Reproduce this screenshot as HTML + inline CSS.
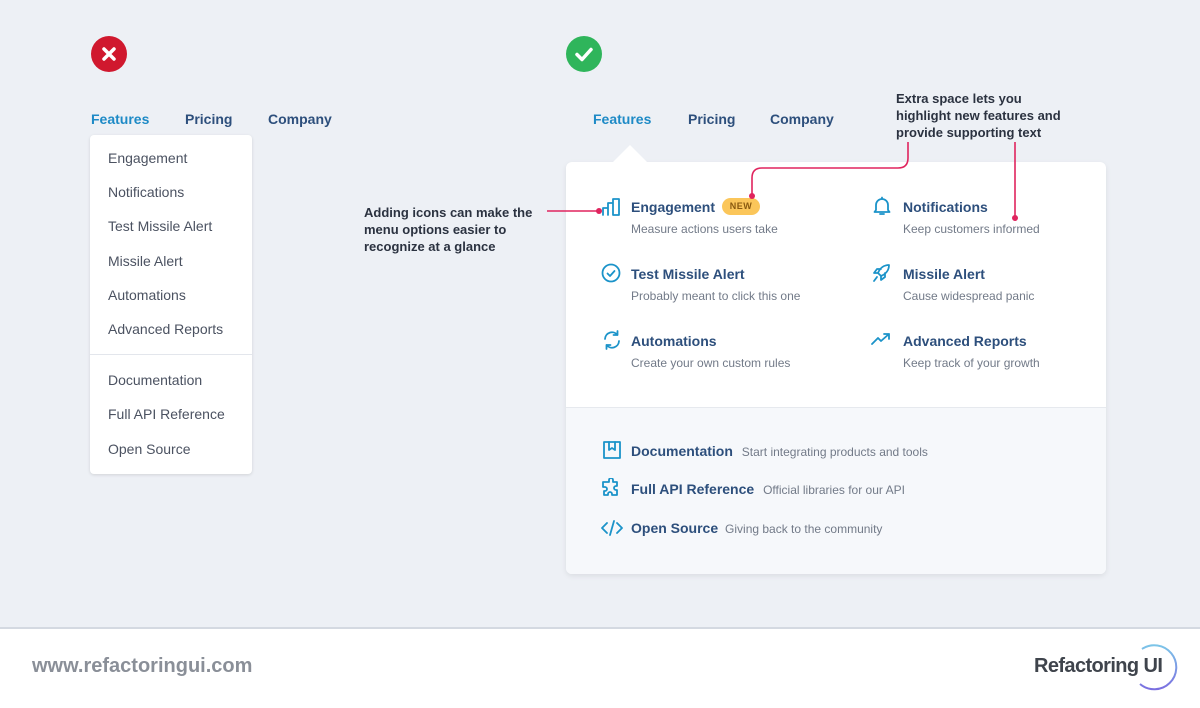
<!DOCTYPE html>
<html><head><meta charset="utf-8"><style>
*{margin:0;padding:0;box-sizing:border-box}
body{width:1200px;height:708px;background:#edf0f5;font-family:"Liberation Sans",sans-serif;position:relative;overflow:hidden}
.a{position:absolute;white-space:nowrap}
.nav{font-weight:bold;font-size:14px;color:#2d4f7c}
.nav.act{color:#1e8ac6}
.old{left:90px;top:135px;width:162px;height:339px;background:#fff;border-radius:4px;box-shadow:0 1px 3px rgba(0,0,0,.12)}
.old div{position:absolute;left:18px;font-size:14px;color:#4b5261}
.t{font-weight:bold;font-size:14px;color:#2d4f7c}
.s{font-size:12px;color:#727a88}
.note{font-weight:bold;font-size:13px;color:#2b3240;line-height:17px}
.panel{left:566px;top:162px;width:540px;height:412px;background:#fff;border-radius:6px;box-shadow:0 2px 6px rgba(0,0,0,.08);overflow:hidden}
svg.i{position:absolute;fill:none;stroke:#1b93c9;stroke-width:1.8;stroke-linecap:round;stroke-linejoin:round}
</style></head><body>
<svg class="a" style="left:91px;top:36px" width="36" height="36"><circle cx="18" cy="18" r="18" fill="#d0182e"/><path d="M13 13l10 10M23 13l-10 10" stroke="#fff" stroke-width="3.5" stroke-linecap="round"/></svg>
<svg class="a" style="left:566px;top:36px" width="36" height="36"><circle cx="18" cy="18" r="18" fill="#2fb55b"/><path d="M11 18.5l5 5 9-10" stroke="#fff" stroke-width="3.5" fill="none" stroke-linecap="round" stroke-linejoin="round"/></svg>

<div class="a nav act" style="left:91px;top:111px">Features</div>
<div class="a nav" style="left:185px;top:111px">Pricing</div>
<div class="a nav" style="left:268px;top:111px">Company</div>

<div class="a old">
<div style="top:15px">Engagement</div>
<div style="top:49px">Notifications</div>
<div style="top:83px">Test Missile Alert</div>
<div style="top:118px">Missile Alert</div>
<div style="top:152px">Automations</div>
<div style="top:186px">Advanced Reports</div>
<div style="top:219px;left:0;width:162px;height:1px;background:#e3e6ec"></div>
<div style="top:237px">Documentation</div>
<div style="top:271px">Full API Reference</div>
<div style="top:306px">Open Source</div>
</div>

<div class="a nav act" style="left:593px;top:111px">Features</div>
<div class="a nav" style="left:688px;top:111px">Pricing</div>
<div class="a nav" style="left:770px;top:111px">Company</div>

<div class="a panel">
<div class="a" style="left:0;top:245px;width:540px;height:167px;background:#f6f8fb;border-top:1px solid #e6e9ee"></div>
</div>
<div class="a" style="left:613px;top:145px;width:0;height:0;border-left:17px solid transparent;border-right:17px solid transparent;border-bottom:17px solid #fff"></div>

<svg class="i" style="left:601px;top:197px" width="22" height="20"><path d="M2 18V11h5v7M7 18V6h5v12M12 18V2h6v16z"/></svg>
<svg class="i" style="left:601px;top:263px" width="20" height="20"><circle cx="10" cy="10" r="8.5"/><path d="M6.5 10.5l2.5 2.5 4.5-5"/></svg>
<svg class="i" style="left:602px;top:330px" width="20" height="20"><path d="M3 9a7 7 0 0 1 12.5-4M15.5 1v4h-4M17 11a7 7 0 0 1-12.5 4M4.5 19v-4h4"/></svg>
<svg class="i" style="left:872px;top:196px" width="20" height="20"><path d="M4 14V9a6 6 0 0 1 12 0v5l1.5 2h-15zM8 18h4M10 1.5V3"/></svg>
<svg class="i" style="left:871px;top:263px" width="20" height="20"><path d="M18 2c-5 0-9 3-11 8l3 3c5-2 8-6 8-11zM7 10H3l3-4h4M10 13v4l4-3v-4M6 14l-3 4"/></svg>
<svg class="i" style="left:871px;top:332px" width="20" height="14"><path d="M1 12l6-6 3 3 8-7M13 2h5v5"/></svg>
<svg class="i" style="left:603px;top:441px" width="18" height="18"><rect x="1" y="1" width="16" height="16"/><path d="M6 1v8l3-2 3 2V1"/></svg>
<svg class="i" style="left:601px;top:478px" width="21" height="20"><path d="M8 2a2 2 0 0 1 4 0v2h4v4h-1a2 2 0 0 0 0 4h1v5h-5v-1a2 2 0 0 0-4 0v1H3v-4h1a2 2 0 0 0 0-4H2V4h6z"/></svg>
<svg class="i" style="left:601px;top:519px" width="22" height="18"><path d="M6 4L1 9l5 5M16 4l5 5-5 5M13 2L9 16"/></svg>

<div class="a t" style="left:631px;top:199px">Engagement</div>
<div class="a" style="left:722px;top:198px;width:38px;height:17px;background:#fbc65a;border-radius:9px;font-size:9px;font-weight:bold;color:#8a5a10;text-align:center;line-height:17px;letter-spacing:.5px">NEW</div>
<div class="a s" style="left:631px;top:222px">Measure actions users take</div>
<div class="a t" style="left:631px;top:266px">Test Missile Alert</div>
<div class="a s" style="left:631px;top:289px">Probably meant to click this one</div>
<div class="a t" style="left:631px;top:333px">Automations</div>
<div class="a s" style="left:631px;top:356px">Create your own custom rules</div>
<div class="a t" style="left:903px;top:199px">Notifications</div>
<div class="a s" style="left:903px;top:222px">Keep customers informed</div>
<div class="a t" style="left:903px;top:266px">Missile Alert</div>
<div class="a s" style="left:903px;top:289px">Cause widespread panic</div>
<div class="a t" style="left:903px;top:333px">Advanced Reports</div>
<div class="a s" style="left:903px;top:356px">Keep track of your growth</div>

<div class="a t" style="left:631px;top:443px">Documentation <span class="s" style="font-weight:normal;margin-left:5px">Start integrating products and tools</span></div>
<div class="a t" style="left:631px;top:481px">Full API Reference <span class="s" style="font-weight:normal;margin-left:5px">Official libraries for our API</span></div>
<div class="a t" style="left:631px;top:520px">Open Source <span class="s" style="font-weight:normal;margin-left:3px">Giving back to the community</span></div>

<div class="a note" style="left:364px;top:204px">Adding icons can make the<br>menu options easier to<br>recognize at a glance</div>
<div class="a note" style="left:896px;top:90px">Extra space lets you<br>highlight new features and<br>provide supporting text</div>

<svg class="a" style="left:0;top:0" width="1200" height="708" fill="none" stroke="#e0245e" stroke-width="1.6">
<path d="M547 211H599"/><circle cx="599" cy="211" r="3" fill="#e0245e" stroke="none"/>
<path d="M908 142V158Q908 168 898 168H762Q752 168 752 178V196"/><circle cx="752" cy="196" r="3" fill="#e0245e" stroke="none"/>
<path d="M1015 142V218"/><circle cx="1015" cy="218" r="3" fill="#e0245e" stroke="none"/>
</svg>

<div class="a" style="left:0;top:627px;width:1200px;height:81px;background:#fff;border-top:2px solid #d4d9e1"></div>
<div class="a" style="left:32px;top:655px;font-size:20px;font-weight:bold;color:#8a8f98">www.refactoringui.com</div>
<div class="a" style="left:1034px;top:655px;font-size:20px;font-weight:bold;color:#3f444c;letter-spacing:-0.6px">Refactoring UI</div>
<svg class="a" style="left:1126px;top:642px" width="56" height="50" fill="none"><defs><linearGradient id="g" x1="0" y1="0" x2="0" y2="1"><stop offset="0" stop-color="#7cc5e8"/><stop offset="1" stop-color="#7b6fe0"/></linearGradient></defs><path d="M16 7A22 22 0 1 1 14 42" stroke="url(#g)" stroke-width="2"/></svg>
</body></html>
